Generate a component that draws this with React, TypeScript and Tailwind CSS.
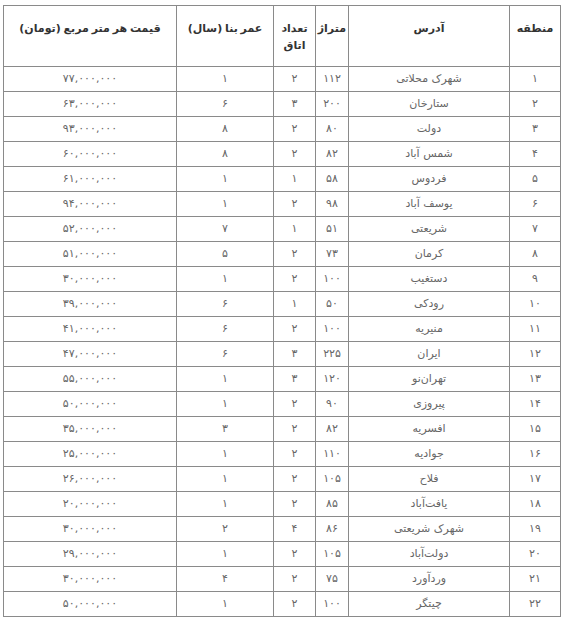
import React from "react";

const toFa = (s: string) => s.replace(/[0-9]/g, (d) => "۰۱۲۳۴۵۶۷۸۹"[Number(d)]);

const rows: [string, string, string, string, string, string][] = [
  ["1", "شهرک محلاتی", "112", "2", "1", "77,000,000"],
  ["2", "ستارخان", "200", "3", "6", "63,000,000"],
  ["3", "دولت", "80", "2", "8", "93,000,000"],
  ["4", "شمس آباد", "82", "2", "8", "60,000,000"],
  ["5", "فردوس", "58", "1", "1", "61,000,000"],
  ["6", "یوسف آباد", "98", "2", "1", "94,000,000"],
  ["7", "شریعتی", "51", "1", "7", "52,000,000"],
  ["8", "کرمان", "73", "2", "5", "51,000,000"],
  ["9", "دستغیب", "100", "2", "1", "30,000,000"],
  ["10", "رودکی", "50", "1", "6", "39,000,000"],
  ["11", "منیریه", "100", "2", "6", "41,000,000"],
  ["12", "ایران", "225", "3", "6", "47,000,000"],
  ["13", "تهران‌نو", "120", "3", "1", "55,000,000"],
  ["14", "پیروزی", "90", "2", "1", "50,000,000"],
  ["15", "افسریه", "82", "2", "3", "35,000,000"],
  ["16", "جوادیه", "110", "2", "1", "25,000,000"],
  ["17", "فلاح", "105", "2", "1", "26,000,000"],
  ["18", "یافت‌آباد", "85", "2", "1", "20,000,000"],
  ["19", "شهرک شریعتی", "86", "4", "2", "30,000,000"],
  ["20", "دولت‌آباد", "105", "2", "1", "29,000,000"],
  ["21", "وردآورد", "75", "2", "4", "30,000,000"],
  ["22", "چیتگر", "100", "2", "1", "50,000,000"],
];

const td = "border border-[#8a8a8a] text-center text-[11px] text-[#666666] p-0";

export default function App() {
  return (
    <div className="bg-white w-[569px] h-[623px] pt-[5px] pl-[3px]" style={{ fontFamily: '"DejaVu Sans", sans-serif' }}>
      <table dir="rtl" className="border-collapse table-fixed w-[557px]">
        <colgroup>
          <col className="w-[51px]" />
          <col className="w-[161px]" />
          <col className="w-[33px]" />
          <col className="w-[42px]" />
          <col className="w-[97px]" />
          <col className="w-[173px]" />
        </colgroup>
        <thead>
          <tr className="h-[61px]">
            {["منطقه", "آدرس", "متراژ", "تعداد اتاق", "عمر بنا (سال)", "قیمت هر متر مربع (تومان)"].map((h, i) => (
              <th
                key={i}
                className="border border-[#8a8a8a] align-top pt-[14px] px-[2px] text-[11px] leading-[17px] font-semibold text-[#333333] text-center [word-spacing:-1px]"
              >
                {h}
              </th>
            ))}
          </tr>
        </thead>
        <tbody>
          {rows.map((r, i) => (
            <tr key={i} className="h-[25px]">
              <td className={td}>{toFa(r[0])}</td>
              <td className={td}>{r[1]}</td>
              <td className={td}>{toFa(r[2])}</td>
              <td className={td}>{toFa(r[3])}</td>
              <td className={td}>{toFa(r[4])}</td>
              <td className={td}>
                <span dir="ltr">{toFa(r[5])}</span>
              </td>
            </tr>
          ))}
        </tbody>
      </table>
    </div>
  );
}
